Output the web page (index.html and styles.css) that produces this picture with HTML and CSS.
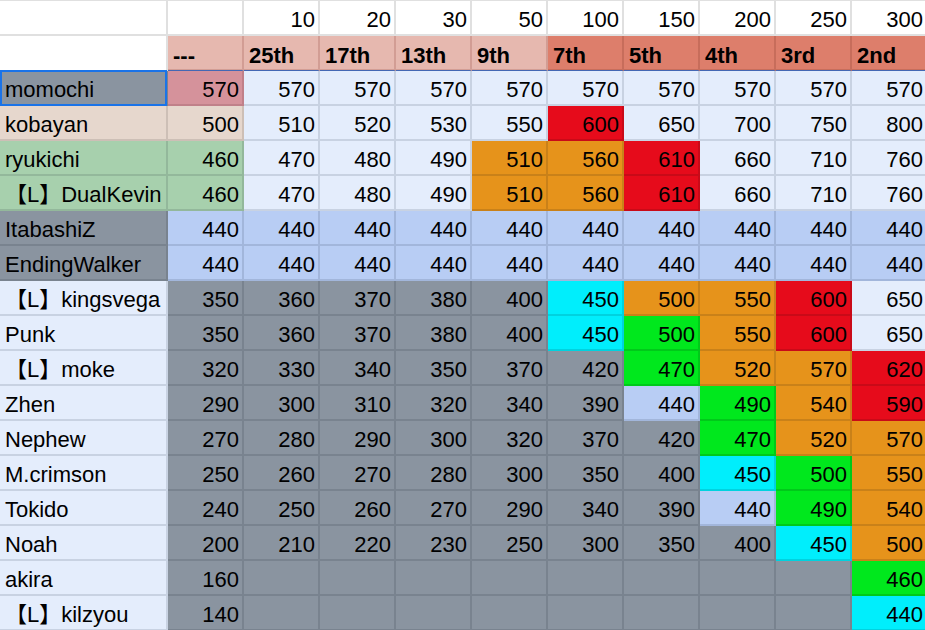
FILE: index.html
```html
<!DOCTYPE html>
<html>
<head>
<meta charset="utf-8">
<link rel="stylesheet" href="styles.css">
</head>
<body>
<div class="sheet">
  <div class="c w top"></div><div class="c w top"></div>
  <div class="c w top n">10</div><div class="c w top n">20</div><div class="c w top n">30</div><div class="c w top n">50</div><div class="c w top n">100</div><div class="c w top n">150</div><div class="c w top n">200</div><div class="c w top n">250</div><div class="c w top n">300</div>

  <div class="c w h2"></div>
  <div class="c hl h2 t">---</div><div class="c hl h2 t">25th</div><div class="c hl h2 t">17th</div><div class="c hl h2 t">13th</div><div class="c hl h2 t">9th</div>
  <div class="c hd h2 t">7th</div><div class="c hd h2 t">5th</div><div class="c hd h2 t">4th</div><div class="c hd h2 t">3rd</div><div class="c hd h2 t">2nd</div>

  <div class="c g name sel">momochi</div>
  <div class="c pk n">570</div><div class="c lb n">570</div><div class="c lb n">570</div><div class="c lb n">570</div><div class="c lb n">570</div><div class="c lb n">570</div><div class="c lb n">570</div><div class="c lb n">570</div><div class="c lb n">570</div><div class="c lb n">570</div>

  <div class="c be name">kobayan</div>
  <div class="c be n">500</div><div class="c lb n">510</div><div class="c lb n">520</div><div class="c lb n">530</div><div class="c lb n">550</div><div class="c r n">600</div><div class="c lb n">650</div><div class="c lb n">700</div><div class="c lb n">750</div><div class="c lb n">800</div>

  <div class="c gn name">ryukichi</div>
  <div class="c gn n">460</div><div class="c lb n">470</div><div class="c lb n">480</div><div class="c lb n">490</div><div class="c o n">510</div><div class="c o n">560</div><div class="c r n">610</div><div class="c lb n">660</div><div class="c lb n">710</div><div class="c lb n">760</div>

  <div class="c gn name">【L】DualKevin</div>
  <div class="c gn n">460</div><div class="c lb n">470</div><div class="c lb n">480</div><div class="c lb n">490</div><div class="c o n">510</div><div class="c o n">560</div><div class="c r n">610</div><div class="c lb n">660</div><div class="c lb n">710</div><div class="c lb n">760</div>

  <div class="c g name">ItabashiZ</div>
  <div class="c b n">440</div><div class="c b n">440</div><div class="c b n">440</div><div class="c b n">440</div><div class="c b n">440</div><div class="c b n">440</div><div class="c b n">440</div><div class="c b n">440</div><div class="c b n">440</div><div class="c b n">440</div>

  <div class="c g name">EndingWalker</div>
  <div class="c b n">440</div><div class="c b n">440</div><div class="c b n">440</div><div class="c b n">440</div><div class="c b n">440</div><div class="c b n">440</div><div class="c b n">440</div><div class="c b n">440</div><div class="c b n">440</div><div class="c b n">440</div>

  <div class="c lb name">【L】kingsvega</div>
  <div class="c g n">350</div><div class="c g n">360</div><div class="c g n">370</div><div class="c g n">380</div><div class="c g n">400</div><div class="c cy n">450</div><div class="c o n">500</div><div class="c o n">550</div><div class="c r n">600</div><div class="c lb n">650</div>

  <div class="c lb name">Punk</div>
  <div class="c g n">350</div><div class="c g n">360</div><div class="c g n">370</div><div class="c g n">380</div><div class="c g n">400</div><div class="c cy n">450</div><div class="c gr n">500</div><div class="c o n">550</div><div class="c r n">600</div><div class="c lb n">650</div>

  <div class="c lb name">【L】moke</div>
  <div class="c g n">320</div><div class="c g n">330</div><div class="c g n">340</div><div class="c g n">350</div><div class="c g n">370</div><div class="c g n">420</div><div class="c gr n">470</div><div class="c o n">520</div><div class="c o n">570</div><div class="c r n">620</div>

  <div class="c lb name">Zhen</div>
  <div class="c g n">290</div><div class="c g n">300</div><div class="c g n">310</div><div class="c g n">320</div><div class="c g n">340</div><div class="c g n">390</div><div class="c b n">440</div><div class="c gr n">490</div><div class="c o n">540</div><div class="c r n">590</div>

  <div class="c lb name">Nephew</div>
  <div class="c g n">270</div><div class="c g n">280</div><div class="c g n">290</div><div class="c g n">300</div><div class="c g n">320</div><div class="c g n">370</div><div class="c g n">420</div><div class="c gr n">470</div><div class="c o n">520</div><div class="c o n">570</div>

  <div class="c lb name">M.crimson</div>
  <div class="c g n">250</div><div class="c g n">260</div><div class="c g n">270</div><div class="c g n">280</div><div class="c g n">300</div><div class="c g n">350</div><div class="c g n">400</div><div class="c cy n">450</div><div class="c gr n">500</div><div class="c o n">550</div>

  <div class="c lb name">Tokido</div>
  <div class="c g n">240</div><div class="c g n">250</div><div class="c g n">260</div><div class="c g n">270</div><div class="c g n">290</div><div class="c g n">340</div><div class="c g n">390</div><div class="c b n">440</div><div class="c gr n">490</div><div class="c o n">540</div>

  <div class="c lb name">Noah</div>
  <div class="c g n">200</div><div class="c g n">210</div><div class="c g n">220</div><div class="c g n">230</div><div class="c g n">250</div><div class="c g n">300</div><div class="c g n">350</div><div class="c g n">400</div><div class="c cy n">450</div><div class="c o n">500</div>

  <div class="c lb name">akira</div>
  <div class="c g n">160</div><div class="c g"></div><div class="c g"></div><div class="c g"></div><div class="c g"></div><div class="c g"></div><div class="c g"></div><div class="c g"></div><div class="c g"></div><div class="c gr n">460</div>

  <div class="c lb name">【L】kilzyou</div>
  <div class="c g n">140</div><div class="c g"></div><div class="c g"></div><div class="c g"></div><div class="c g"></div><div class="c g"></div><div class="c g"></div><div class="c g"></div><div class="c g"></div><div class="c cy n">440</div>
</div>
</body>
</html>
```

FILE: styles.css
```css
html, body {
  margin: 0;
  padding: 0;
  background: #ffffff;
  overflow: hidden;
}

.sheet {
  display: grid;
  grid-template-columns: 168px repeat(10, 76px);
  grid-template-rows: 36px repeat(17, 35px);
  width: 928px;
  font-family: "Liberation Sans", "Noto Sans CJK JP", Arial, sans-serif;
  font-size: 22px;
  line-height: 24px;
  color: #000000;
}

.c {
  box-sizing: border-box;
  display: flex;
  align-items: flex-end;
  padding: 0 3px 2px 5px;
  border-right: 2px solid;
  border-bottom: 2px solid;
  white-space: nowrap;
  overflow: hidden;
  position: relative;
}

.n { justify-content: flex-end; }
.name { padding-left: 5px; }
.t { font-weight: bold; }

.top { border-top: 1px solid #dcdcdc; }

.h2 {
  border-bottom: 1px solid #4468b4;
}

.w  { background: #ffffff; border-color: #e0e0e0; }
.hl { background: #e6b8af; border-right-color: #d29d94; box-shadow: inset 0 -1px 0 #d29d94; }
.hd { background: #dd7e6b; border-right-color: #c76d5b; box-shadow: inset 0 -1px 0 #c76d5b; }
.w.h2 { border-bottom-color: #e0e0e0; }

.g  { background: #8a94a0; border-color: #79838f; }
.lb { background: #e4edfc; border-color: #c8d2e2; }
.b  { background: #b8cdf4; border-color: #a2b6db; }
.pk { background: #d5929b; border-color: #c08089; }
.be { background: #e6d7cd; border-color: #cdbfb6; }
.gn { background: #a7d0ad; border-color: #93b89b; }
.r  { background: #e60b1b; border-color: #c90a18; }
.o  { background: #e6931b; border-color: #c98119; }
.gr { background: #00e81d; border-color: #00c91a; }
.cy { background: #00eefc; border-color: #00d2df; }

.sel {
  overflow: visible;
  z-index: 2;
}

.sel::after {
  content: "";
  position: absolute;
  top: -1px;
  left: 0;
  right: -1px;
  bottom: -2px;
  border: 2px solid #1a73e8;
  pointer-events: none;
}
```
